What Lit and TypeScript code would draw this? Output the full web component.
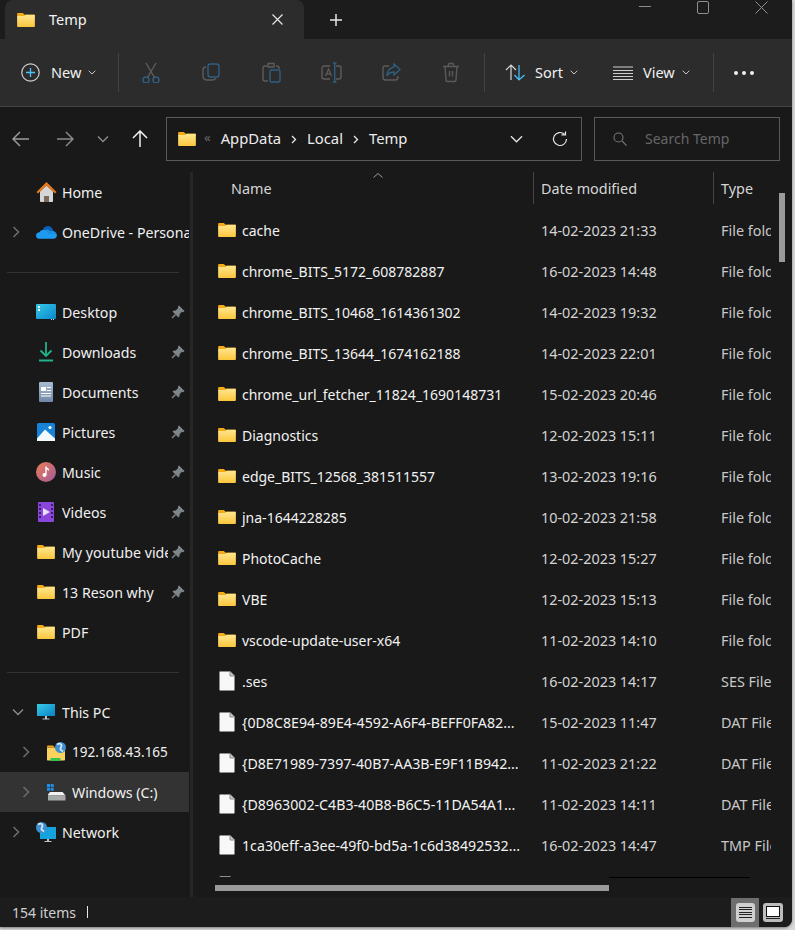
import { LitElement, css, html, svg } from 'lit';
import { customElement } from 'lit/decorators.js';

const folderIcon = html`<svg class="ico-folder" width="18" height="14" viewBox="0 0 19 15">
  <defs><linearGradient id="fg" x1="0" y1="0" x2="0" y2="1"><stop offset="0" stop-color="#ffe68f"/><stop offset="1" stop-color="#fcc63c"/></linearGradient></defs>
  <path d="M0 1.200C0 .5.5 0 1.200 0H6l2.200 2H19v2H0z" fill="#f5ab16"/>
  <path d="M0 3.200h7.500L9.300 2h8.500c.7 0 1.200.5 1.200 1.200v10.600c0 .7-.5 1.200-1.200 1.200H1.200C.5 15 0 14.500 0 13.800z" fill="url(#fg)"/>
</svg>`;

const fileIcon = html`<svg class="ico-file" width="16" height="20" viewBox="0 0 16 20">
  <path d="M.5 1.500C.5.900.9.500 1.500.500H11L15.500 5V18.500C15.500 19.100 15.100 19.500 14.500 19.500H1.500C.9 19.500.5 19.100.5 18.500Z" fill="#f8f8f8" stroke="#8c8c8c"/>
  <path d="M11 .500V5H15.500" fill="#c9c9c9" stroke="#8c8c8c"/>
</svg>`;

const chevRight = html`<svg width="8" height="12" viewBox="0 0 8 12"><path d="M1.500 1L6.500 6L1.500 11" fill="none" stroke="#6e6e6e" stroke-width="1.500"/></svg>`;
const chevDown = html`<svg width="12" height="8" viewBox="0 0 12 8"><path d="M1 1.500L6 6.500L11 1.500" fill="none" stroke="#8a8a8a" stroke-width="1.500"/></svg>`;
const smallChev = html`<svg width="8" height="5" viewBox="0 0 8 5"><path d="M.7.700L4 4L7.300.700" fill="none" stroke="#c8c8c8" stroke-width="1"/></svg>`;
const crumbSep = html`<svg class="crumb-sep" width="6" height="9" viewBox="0 0 6 9"><path d="M1 1L4.500 4.500L1 8" fill="none" stroke="#e8e8e8" stroke-width="1.300"/></svg>`;

const pin = html`<svg width="14" height="14" viewBox="0 0 14 14"><path d="M8 .5L13.500 6L12.300 7.200L11 6.800L8.500 9.300C8.800 10.500 8.500 11.500 7.500 12.500L1.500 6.500C2.500 5.500 3.500 5.200 4.700 5.500L7.200 3L6.800 1.700Z" fill="#7f868a"/><path d="M4.500 9.500L1 13" stroke="#7f868a" stroke-width="1.500"/></svg>`;

const globe = (cx: number, cy: number) => svg`
  <circle cx="${cx}" cy="${cy}" r="5.500" fill="#3f8fd0"/>
  <path d="M${cx - 3.500} ${cy - 3}C${cx - 1.500} ${cy - 4.500} ${cx} ${cy - 4} ${cx + 1} ${cy - 2.500}C${cx + 1.500} ${cy - 1} ${cx - .5} ${cy} ${cx} ${cy + 2}L${cx + 2.500} ${cy + 4}" stroke="#cfe8f8" stroke-width="1.800" fill="none"/>`;

const icons: Record<string, unknown> = {
  folder: folderIcon,
  home: html`<svg width="21" height="20" viewBox="0 0 21 20">
    <path d="M4 9.500L10.500 3.500L17 9.500V19C17 19.500 16.600 20 16 20H13V14H8V20H5C4.400 20 4 19.500 4 19Z" fill="#d6d6d6"/>
    <path d="M8 14H13V20H8Z" fill="#7a6a5e"/>
    <path d="M.5 10L10.500 0L20.500 10L19 11.500L10.500 3.500L2 11.500Z" fill="#e8791b"/></svg>`,
  cloud: html`<svg width="21" height="14" viewBox="0 0 21 14">
    <path d="M7 4C8.500 1 12.500 0 15 2C16.500 3 17 5 17 6L9 7Z" fill="#0c5fb8"/>
    <path d="M9 5C11 4 13 4.500 14 6C16.500 5.500 19 6 20.500 8.500L12 11Z" fill="#1b8fe0"/>
    <path d="M3 13.800C1 13.800 0 12.300 0 10.800C0 8.800 1.500 7.300 3.500 7.300C4.500 5 7.500 4 9.500 5.500C11 6.500 11.500 7.500 12 9L20.500 8.500C21.300 10 21 13.800 17 13.800Z" fill="#1e9bf0"/></svg>`,
  desktop: html`<svg width="20" height="16" viewBox="0 0 20 16">
    <defs><linearGradient id="dk" x1="0" y1="0" x2="1" y2="1"><stop offset="0" stop-color="#35c8ea"/><stop offset="1" stop-color="#0a86c8"/></linearGradient></defs>
    <rect width="20" height="15" rx="1" fill="url(#dk)"/><rect x="2" y="2" width="2" height="2" fill="#e8fbff"/><rect x="2" y="5" width="2" height="2" fill="#e8fbff"/>
    <rect x="15" y="15" width="1" height="1" fill="#bde"/><rect x="17" y="15" width="1" height="1" fill="#bde"/></svg>`,
  downloads: html`<svg width="14" height="20" viewBox="0 0 14 20"><path d="M7 0V14M1.500 8.500L7 14L12.500 8.500" fill="none" stroke="#1fb28c" stroke-width="1.800"/><path d="M0 18.500H14" stroke="#1fb28c" stroke-width="2"/></svg>`,
  documents: html`<svg width="14" height="20" viewBox="0 0 14 20">
    <defs><linearGradient id="dc" x1="0" y1="0" x2="0" y2="1"><stop offset="0" stop-color="#a9bcd2"/><stop offset="1" stop-color="#7088a8"/></linearGradient></defs>
    <rect width="14" height="20" rx="1" fill="url(#dc)"/><rect x="2" y="5" width="5" height="4" fill="#fff"/><path d="M8 5.500H12M8 8.500H12M2 11.500H12M2 14H12" stroke="#fff"/></svg>`,
  pictures: html`<svg width="18" height="18" viewBox="0 0 18 18">
    <rect width="18" height="18" rx="1.500" fill="#1683d8"/><circle cx="13" cy="4.500" r="1.600" fill="#fff"/>
    <path d="M0 15.500L8 6.500L18 15.500V18H0Z" fill="#f2fbff"/></svg>`,
  music: html`<svg width="20" height="20" viewBox="0 0 20 20">
    <defs><linearGradient id="ms" x1="0" y1="0" x2="1" y2="1"><stop offset="0" stop-color="#e97f52"/><stop offset="1" stop-color="#a4589e"/></linearGradient></defs>
    <circle cx="10" cy="10" r="10" fill="url(#ms)"/><path d="M10 4.500V12.500" stroke="#fff" stroke-width="1.400"/><circle cx="8.500" cy="13" r="2" fill="#fff"/><path d="M10 4.500C10.500 6 12.500 6 13 7.500V9C12 7.500 11 7.500 10 7Z" fill="#fff"/></svg>`,
  videos: html`<svg width="16" height="20" viewBox="0 0 16 20">
    <rect width="16" height="20" rx="1" fill="#8a46d8"/><rect x="1" y="2" width="2" height="2" fill="#3c1a70"/><rect x="1" y="6" width="2" height="2" fill="#3c1a70"/><rect x="1" y="10" width="2" height="2" fill="#3c1a70"/><rect x="1" y="14" width="2" height="2" fill="#3c1a70"/>
    <rect x="13" y="2" width="2" height="2" fill="#3c1a70"/><rect x="13" y="6" width="2" height="2" fill="#3c1a70"/><rect x="13" y="10" width="2" height="2" fill="#3c1a70"/><rect x="13" y="14" width="2" height="2" fill="#3c1a70"/>
    <path d="M5 6L12 10L5 14Z" fill="#e8e0f8"/></svg>`,
  pc: html`<svg width="18" height="16" viewBox="0 0 18 16">
    <defs><linearGradient id="pc" x1="0" y1="0" x2="1" y2="1"><stop offset="0" stop-color="#38cbe8"/><stop offset="1" stop-color="#0a80c4"/></linearGradient></defs>
    <rect width="18" height="12" fill="url(#pc)"/><path d="M8 12H10V14.500H8ZM5.500 14.500H12.500V15.500H5.500Z" fill="#b8c4cc"/></svg>`,
  share: html`<svg width="19" height="20" viewBox="0 0 19 20">
    <path d="M0 5.500H7.500L9 7H18V17.500C18 18.200 17.500 18.500 17 18.500H1C.4 18.500 0 18.200 0 17.500Z" fill="#fcd25e"/><path d="M0 4.500C0 4 .4 3.500 1 3.500H6L8 5.500H0Z" fill="#f0a818"/>
    <rect x="3.500" y="16" width="10" height="3" fill="#37c24d"/>
    ${globe(13.500, 5.500)}</svg>`,
  drive: html`<svg width="19" height="17" viewBox="0 0 19 17">
    <rect width="3" height="3" fill="#1f8fe8"/><rect x="3.700" width="3" height="3" fill="#1f8fe8"/><rect y="3.700" width="3" height="3" fill="#1f8fe8"/><rect x="3.700" y="3.700" width="3" height="3" fill="#1f8fe8"/>
    <path d="M1 10.500L3 8H15.500L18.500 11.500H1Z" fill="#f2f2f2"/><rect x="1" y="11.500" width="17.500" height="5" fill="#a9a9a9"/><rect x="3" y="13.500" width="1.500" height="1" fill="#41d36a"/></svg>`,
  network: html`<svg width="20" height="20" viewBox="0 0 20 20">
    <rect x="4" y="5" width="16" height="12" fill="#14a3dc"/><path d="M11 17H13V19H11ZM8.500 19H15.500V20H8.500Z" fill="#b8c4cc"/>
    ${globe(5.500, 5.500)}</svg>`,
};

interface NavItem { label?: string; icon?: string; chev?: 'right' | 'down'; pinned?: boolean; nested?: boolean; selected?: boolean; divider?: boolean; tight?: boolean }

const navItems: NavItem[] = [
  { label: 'Home', icon: 'home' },
  { label: 'OneDrive - Personal', icon: 'cloud', chev: 'right' },
  { divider: true },
  { label: 'Desktop', icon: 'desktop', pinned: true },
  { label: 'Downloads', icon: 'downloads', pinned: true },
  { label: 'Documents', icon: 'documents', pinned: true },
  { label: 'Pictures', icon: 'pictures', pinned: true },
  { label: 'Music', icon: 'music', pinned: true },
  { label: 'Videos', icon: 'videos', pinned: true },
  { label: 'My youtube videos', icon: 'folder', pinned: true },
  { label: '13 Reson why', icon: 'folder', pinned: true },
  { label: 'PDF', icon: 'folder' },
  { divider: true },
  { label: 'This PC', icon: 'pc', chev: 'down' },
  { label: '192.168.43.165', icon: 'share', chev: 'right', nested: true, tight: true },
  { label: 'Windows (C:)', icon: 'drive', chev: 'right', nested: true, selected: true },
  { label: 'Network', icon: 'network', chev: 'right' },
];

const files: [string, string, string, boolean][] = [
  ['cache', '14-02-2023 21:33', 'File folder', true],
  ['chrome_BITS_5172_608782887', '16-02-2023 14:48', 'File folder', true],
  ['chrome_BITS_10468_1614361302', '14-02-2023 19:32', 'File folder', true],
  ['chrome_BITS_13644_1674162188', '14-02-2023 22:01', 'File folder', true],
  ['chrome_url_fetcher_11824_1690148731', '15-02-2023 20:46', 'File folder', true],
  ['Diagnostics', '12-02-2023 15:11', 'File folder', true],
  ['edge_BITS_12568_381511557', '13-02-2023 19:16', 'File folder', true],
  ['jna-1644228285', '10-02-2023 21:58', 'File folder', true],
  ['PhotoCache', '12-02-2023 15:27', 'File folder', true],
  ['VBE', '12-02-2023 15:13', 'File folder', true],
  ['vscode-update-user-x64', '11-02-2023 14:10', 'File folder', true],
  ['.ses', '16-02-2023 14:17', 'SES File', false],
  ['{0D8C8E94-89E4-4592-A6F4-BEFF0FA82...', '15-02-2023 11:47', 'DAT File', false],
  ['{D8E71989-7397-40B7-AA3B-E9F11B942...', '11-02-2023 21:22', 'DAT File', false],
  ['{D8963002-C4B3-40B8-B6C5-11DA54A1...', '11-02-2023 14:11', 'DAT File', false],
  ['1ca30eff-a3ee-49f0-bd5a-1c6d38492532...', '16-02-2023 14:47', 'TMP File', false],
  ['', '', '', false],
];

const blueS = '#2f5f80';
const greyS = '#5c5c5c';
const toolIcons = [
  svg`<circle cx="5" cy="18" r="3" fill="none" stroke="${blueS}" stroke-width="1.400"/><circle cx="15" cy="18" r="3" fill="none" stroke="${blueS}" stroke-width="1.400"/><path d="M6.500 15.500L15 1M13.500 15.500L5 1" fill="none" stroke="${greyS}" stroke-width="1.400"/>`,
  svg`<rect x="7" y="2" width="11" height="13" rx="2.500" fill="none" stroke="${blueS}" stroke-width="1.400"/><path d="M5 5C3 5 2 6 2 8V14C2 17 3.500 18 6 18H12C13.500 18 14.500 17 15 16" fill="none" stroke="${greyS}" stroke-width="1.400"/>`,
  svg`<path d="M6 4H4C2.500 4 2 5 2 6V17C2 18.500 3 19 4 19H7M15 4H16C17.500 4 18 5 18 6V7M7 1.500H13V5H7Z" fill="none" stroke="${greyS}" stroke-width="1.400"/><rect x="9" y="8" width="10" height="12" rx="1.500" fill="none" stroke="${blueS}" stroke-width="1.400"/>`,
  svg`<path d="M9 4H3C2 4 1 5 1 6V15C1 16 2 17 3 17H9M15 4H18C19 4 20 5 20 6V15C20 16 19 17 18 17H15" fill="none" stroke="${greyS}" stroke-width="1.400"/><path d="M4.500 14L7.500 7L10.500 14M5.500 11.800H9.500" fill="none" stroke="${greyS}" stroke-width="1.200"/><path d="M12 1H15.500M13.700 1V20M12 20H15.500" fill="none" stroke="${blueS}" stroke-width="1.400"/>`,
  svg`<path d="M8 4H4C2.500 4 2 5 2 6V15C2 17 3 18 4.500 18H14C16 18 17 17 17 15V14" fill="none" stroke="${greyS}" stroke-width="1.400"/><path d="M13 2L19 7.500L13 13V10C10 10 7.500 11 6 14C6 10 8 6 13 5Z" fill="none" stroke="${blueS}" stroke-width="1.400"/>`,
  svg`<path d="M2 4.500H18M7 4L8 1.500H12L13 4M4 4.500L5 18C5 19 5.500 19.500 6.500 19.500H13.500C14.500 19.500 15 19 15 18L16 4.500" fill="none" stroke="#5a5a5a" stroke-width="1.400"/><path d="M8.500 9V14.500M11.500 9V14.500" stroke="#5a5a5a" stroke-width="1.400"/>`,
];

@customElement('app-root')
export class AppRoot extends LitElement {
  renderNavRow(item: NavItem) {
    if (item.divider) return html`<div class="nav-divider"><span></span></div>`;
    return html`<div class="nav-row ${item.nested ? 'nested' : ''} ${item.selected ? 'selected' : ''}">
      <span class="nav-chev">${item.chev === 'right' ? chevRight : item.chev === 'down' ? chevDown : ''}</span>
      <span class="nav-icon">${icons[item.icon!]}</span>
      <span class="nav-label ${item.tight ? 'tight' : ''}">${item.label}</span>
      ${item.pinned ? html`<span class="nav-pin">${pin}</span>` : ''}
    </div>`;
  }

  render() {
    return html`
      <div class="window">
        <div class="titlebar">
          <div class="tab">
            <span class="tab-icon">${folderIcon}</span>
            <span class="tab-title">Temp</span>
            <svg class="tab-close" width="11" height="11" viewBox="0 0 11 11"><path d="M.5.500L10.500 10.500M10.500.500L.5 10.500" stroke="#e6e6e6" stroke-width="1.200"/></svg>
          </div>
          <svg class="tab-add" width="12" height="12" viewBox="0 0 12 12"><path d="M6 0V12M0 6H12" stroke="#e6e6e6" stroke-width="1.500"/></svg>
          <div class="win-controls">
            <span class="win-min"></span>
            <span class="win-max"></span>
            <svg width="13" height="13" viewBox="0 0 13 13"><path d="M.5.500L12.500 12.500M12.500.500L.5 12.500" stroke="#8f8f8f" stroke-width="1"/></svg>
          </div>
        </div>

        <div class="toolbar">
          <div class="tool-new">
            <svg width="19" height="19" viewBox="0 0 19 19"><circle cx="9.500" cy="9.500" r="8.700" fill="none" stroke="#d0d0d0" stroke-width="1.200"/><path d="M9.500 5V14M5 9.500H14" stroke="#4cc2ff" stroke-width="1.300"/></svg>
            <span class="tool-text">New</span>${smallChev}
          </div>
          <span class="tool-sep"></span>
          <div class="tool-group">
            ${toolIcons.map((p) => html`<span class="tool-btn"><svg width="21" height="21" viewBox="0 0 21 21">${p}</svg></span>`)}
          </div>
          <span class="tool-sep sep-sort"></span>
          <div class="tool-sort">
            <svg width="21" height="17" viewBox="0 0 21 17"><path d="M6 16V1M1 6L6 1L11 6" fill="none" stroke="#d8d8d8" stroke-width="1.200"/><path d="M14 1V16M9.500 11L14 16L19.500 11" fill="none" stroke="#4cc2ff" stroke-width="1.200"/></svg>
            <span class="tool-text">Sort</span>${smallChev}
          </div>
          <div class="tool-view">
            <svg width="20" height="14" viewBox="0 0 20 14"><path d="M0 1H20M0 4.500H20M0 7.500H20M0 10.500H20M0 13.500H20" stroke="#cfcfcf" stroke-width="1"/></svg>
            <span class="tool-text">View</span>${smallChev}
          </div>
          <span class="tool-sep"></span>
          <span class="tool-more"><i></i><i></i><i></i></span>
        </div>

        <div class="addressbar">
          <span class="nav-btn b-back"><svg width="18" height="16" viewBox="0 0 18 16"><path d="M17 8H1M8 1L1 8L8 15" fill="none" stroke="#9a9a9a" stroke-width="1.500"/></svg></span>
          <span class="nav-btn b-fwd"><svg width="18" height="16" viewBox="0 0 18 16"><path d="M1 8H17M10 1L17 8L10 15" fill="none" stroke="#8a8a8a" stroke-width="1.500"/></svg></span>
          <span class="nav-btn b-rec">${chevDown}</span>
          <span class="nav-btn b-up"><svg width="16" height="18" viewBox="0 0 16 18"><path d="M8 17V1M1 8L8 1L15 8" fill="none" stroke="#f0f0f0" stroke-width="1.500"/></svg></span>
          <div class="crumbs">
            <span class="crumb-folder">${folderIcon}</span>
            <span class="crumb-more">«</span>
            <span class="crumb">AppData</span>${crumbSep}
            <span class="crumb">Local</span>${crumbSep}
            <span class="crumb">Temp</span>
            <svg class="crumb-down" width="13" height="8" viewBox="0 0 14 8"><path d="M1 1L7 7L13 1" fill="none" stroke="#e8e8e8" stroke-width="1.300"/></svg>
            <svg class="crumb-refresh" width="16" height="16" viewBox="0 0 16 16"><path d="M14.500 8A6.500 6.500 0 1 1 12.500 3.300" fill="none" stroke="#e8e8e8" stroke-width="1.200"/><path d="M9.500 3.800H13.500V.500" fill="none" stroke="#e8e8e8" stroke-width="1.200"/></svg>
          </div>
          <div class="search">
            <svg width="14" height="14" viewBox="0 0 14 14"><circle cx="5.500" cy="5.500" r="4.500" fill="none" stroke="#767676" stroke-width="1.100"/><path d="M9 9L13.500 13.500" stroke="#767676" stroke-width="1.100"/></svg>
            <span class="search-text">Search Temp</span>
          </div>
        </div>

        <div class="body">
          <nav class="sidebar">${navItems.map((i) => this.renderNavRow(i))}</nav>
          <div class="splitter"></div>
          <section class="main">
            <div class="cols">
              <div class="col col-name">
                <svg class="sort-caret" width="10" height="5" viewBox="0 0 10 5"><path d="M.5 4.500L5 .5L9.500 4.500" fill="none" stroke="#9a9a9a"/></svg>
                Name
              </div>
              <div class="col col-date">Date modified</div>
              <div class="col col-type">Type</div>
            </div>
            <div class="rows">
              ${files.map(([name, date, type, isDir]) => html`<div class="row">
                <div class="cell-name"><span class="file-icon">${isDir ? folderIcon : fileIcon}</span><span class="file-name ${isDir ? 'dir' : ''}">${name}</span></div>
                <div class="cell-date">${date}</div>
                <div class="cell-type">${type}</div>
              </div>`)}
            </div>
            <div class="vscroll"></div>
            <div class="hscroll"></div>
            <div class="hline"></div>
          </section>
        </div>

        <div class="statusbar">
          <span class="status-count">154 items</span>
          <span class="status-bar"></span>
          <div class="view-switch">
            <span class="view-btn active"><span class="view-details"><i></i><i></i><i></i><i></i><i></i></span></span>
            <span class="view-btn second"><span class="view-tiles"><b></b><i></i></span></span>
          </div>
        </div>
      </div>
    `;
  }

  static styles = css`
    :host {
      display: block;
      width: 795px;
      height: 930px;
      overflow: hidden;
      background: #d8d8d8;
      font-family: "Noto Sans", "Open Sans", sans-serif;
      font-size: 14px;
      color: #f0f0f0;
    }

    .window {
      width: 792px;
      height: 927px;
      background: #191919;
      border-bottom-right-radius: 8px;
      box-shadow: 0 1px 3px #777;
      display: flex;
      flex-direction: column;
      overflow: hidden;
    }

    svg { display: block; flex: none; }

    /* title bar */
    .titlebar {
      height: 39px;
      flex: none;
      background: #1c1c1c;
      display: flex;
      align-items: center;
    }
    .tab {
      margin-left: 5px;
      width: 299px;
      height: 39px;
      box-sizing: border-box;
      background: #2c2c2c;
      border-radius: 8px 8px 0 0;
      display: flex;
      align-items: center;
      padding: 0 21px 0 12px;
    }
    .tab-icon { margin-right: 14px; }
    .tab-title { flex: 1; font-size: 14.5px; color: #f4f4f4; margin-top: -2px; }
    .tab-add { margin-left: 26px; }
    .win-controls {
      margin-left: auto;
      margin-right: 24px;
      align-self: flex-start;
      padding-top: 1px;
      display: flex;
      align-items: flex-start;
      gap: 46px;
    }
    .win-min { width: 12px; height: 1px; background: #8a8a8a; margin-top: 5px; }
    .win-max { width: 10px; height: 11px; border: 1px solid #8f8f8f; border-radius: 2px; }

    /* command bar */
    .toolbar {
      height: 68px;
      flex: none;
      box-sizing: border-box;
      background: #2c2c2c;
      border-bottom: 1px solid #444;
      display: flex;
      align-items: center;
    }
    .tool-new { width: 118px; box-sizing: border-box; padding-left: 21px; display: flex; align-items: center; }
    .tool-text { margin: -2px 7px 0 10px; font-size: 14.5px; color: #f0f0f0; }
    .tool-new .tool-text { margin-left: 11px; }
    .tool-sep { width: 1px; height: 39px; background: #424242; flex: none; }
    .tool-group { margin-left: 2px; display: flex; }
    .tool-btn { width: 60px; display: flex; justify-content: center; }
    .sep-sort { margin-left: 3px; }
    .tool-sort { margin-left: 20px; width: 108px; display: flex; align-items: center; }
    .tool-sort .tool-text { margin-left: 9px; }
    .tool-view { width: 100px; display: flex; align-items: center; }
    .tool-more { margin-left: 20px; display: flex; gap: 4px; }
    .tool-more i { width: 4px; height: 4px; border-radius: 50%; background: #f0f0f0; }

    /* address row */
    .addressbar {
      height: 65px;
      flex: none;
      box-sizing: border-box;
      padding-bottom: 1px;
      display: flex;
      align-items: center;
    }
    .nav-btn { display: flex; justify-content: center; align-items: center; flex: none; }
    .b-back { margin-left: 12px; width: 18px; }
    .b-fwd { margin-left: 26px; width: 18px; }
    .b-rec { margin-left: 23px; width: 12px; }
    .b-up { margin-left: 23px; width: 16px; }
    .crumbs {
      margin-left: 18px;
      width: 416px;
      height: 44px;
      box-sizing: border-box;
      border: 1px solid #5a5a5a;
      display: flex;
      align-items: center;
      padding-left: 11px;
    }
    .crumb-more { margin: -5px 10px 0 8px; font-size: 13px; color: #6a6a6a; }
    .crumb { font-size: 14.8px; color: #ececec; margin-top: -2px; }
    .crumb-sep { margin: 0 10px; }
    .crumb-down { margin-left: auto; }
    .crumb-refresh { margin: 0 13px 0 29px; }
    .search {
      margin-left: 12px;
      width: 186px;
      height: 44px;
      box-sizing: border-box;
      border: 1px solid #5a5a5a;
      display: flex;
      align-items: center;
      padding-left: 18px;
      gap: 18px;
      font-size: 14px;
      color: #666;
    }
    .search-text { margin-top: -1px; }

    /* content */
    .body { flex: 1; min-height: 0; display: flex; }
    .sidebar { width: 189px; flex: none; overflow: hidden; }
    .nav-row {
      height: 40px;
      display: flex;
      align-items: center;
      padding-left: 12px;
      white-space: nowrap;
      font-size: 14.2px;
    }
    .nav-row.nested { padding-left: 22px; }
    .nav-row.selected { background: #333; }
    .nav-chev { width: 24px; flex: none; display: flex; }
    .nav-icon { width: 20px; flex: none; margin-right: 6px; display: flex; justify-content: center; }
    .nav-label { flex: 1; min-width: 0; overflow: hidden; }
    .nav-label.tight { font-size: 13.5px; }
    .nav-pin { margin: 0 4px 0 3px; flex: none; }
    .nav-divider { height: 40px; display: flex; align-items: center; padding: 0 10px 0 7px; }
    .nav-divider span { flex: 1; height: 1px; background: #333; }
    .splitter { width: 3px; margin-left: 1px; flex: none; background: #262626; }

    .main { flex: 1; min-width: 0; position: relative; overflow: hidden; }
    .cols { height: 37px; display: flex; color: #d6d6d6; font-size: 14.4px; }
    .col { height: 32px; display: flex; align-items: center; box-sizing: border-box; position: relative; }
    .col-name { width: 340px; padding-left: 38px; }
    .col-date { width: 180px; padding-left: 7px; border-left: 1px solid #454545; }
    .col-type { padding-left: 7px; border-left: 1px solid #454545; }
    .sort-caret { position: absolute; left: 180px; top: 1px; }
    .rows { height: 668px; overflow: hidden; }
    .row { height: 41px; display: flex; align-items: center; white-space: nowrap; font-size: 14.4px; }
    .cell-name { width: 348px; flex: none; box-sizing: border-box; padding-left: 25px; display: flex; align-items: center; }
    .file-icon { width: 24px; flex: none; }
    .ico-file { margin-left: 1px; }
    .file-name { color: #f2f2f2; font-size: 14.2px; padding-top: 2px; }
    .file-name.dir { font-size: 14px; }
    .cell-date { width: 180px; flex: none; color: #d4d4d4; padding-top: 2px; }
    .cell-type { width: 50px; flex: none; overflow: hidden; color: #c8c8c8; padding-top: 2px; }
    .vscroll { position: absolute; left: 586px; top: 21px; width: 6px; height: 69px; background: #9a9a9a; }
    .hscroll { position: absolute; left: 22px; top: 713px; width: 394px; height: 6px; background: #9a9a9a; }
    .hline { position: absolute; left: 416px; top: 705px; width: 141px; height: 1px; background: #000; }

    /* status bar */
    .statusbar {
      height: 30px;
      flex: none;
      background: #1c1c1c;
      display: flex;
      align-items: center;
      padding-left: 12px;
      font-size: 14px;
      color: #cfcfcf;
    }
    .status-bar { width: 1px; height: 12px; background: #e8e8e8; margin-left: 11px; }
    .view-switch { margin-left: auto; margin-right: 9px; display: flex; align-items: center; gap: 4px; }
    .view-btn { width: 28px; height: 29px; box-sizing: border-box; display: flex; justify-content: center; align-items: center; }
    .view-btn.second { width: 20px; }
    .view-btn.active { background: #6e6e6e; }
    .view-details { width: 19px; height: 19px; box-sizing: border-box; padding: 4px 3px; background: #cfcfcf; border-radius: 3px; display: flex; flex-direction: column; justify-content: space-between; }
    .view-details i { height: 1px; background: #222; }
    .view-tiles { width: 20px; height: 19px; box-sizing: border-box; padding: 3px 3px; background: #bdbdbd; border-radius: 3px; display: flex; flex-direction: column; gap: 1px; }
    .view-tiles b { flex: 1; background: #fff; border: 1px solid #111; }
    .view-tiles i { height: 1px; background: #222; }
  `;
}

declare global {
  interface HTMLElementTagNameMap {
    'app-root': AppRoot;
  }
}
